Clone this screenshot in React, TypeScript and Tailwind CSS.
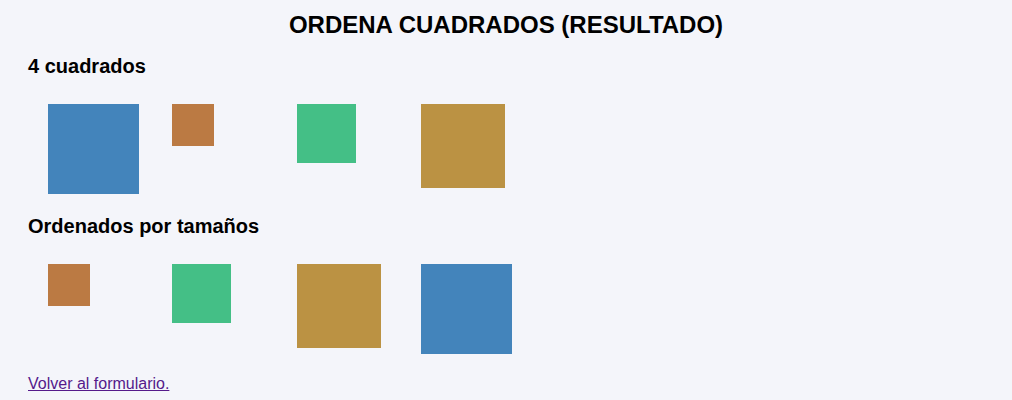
const font = { fontFamily: '"Liberation Sans", Arial, sans-serif' };

type Sq = { size: number; color: string };

const original: Sq[] = [
  { size: 91, color: "bg-[#4384bb]" },
  { size: 42, color: "bg-[#bb7a43]" },
  { size: 59, color: "bg-[#44bf86]" },
  { size: 84, color: "bg-[#bb9243]" },
];

const sorted = [...original].sort((a, b) => a.size - b.size);

function Row({ items }: { items: Sq[] }) {
  return (
    <div className="flex items-start pl-[20px] h-[90px]">
      {items.map((s, i) => (
        <div key={i} className="w-[124.4px] shrink-0">
          <div
            className={s.color}
            style={{ width: s.size, height: s.size === 91 ? 90 : s.size }}
          />
        </div>
      ))}
    </div>
  );
}

export default function App() {
  return (
    <div className="min-h-[400px] bg-[#f4f5fa] text-black px-[28px]" style={font}>
      <h1 className="pt-[11px] text-center text-[24px] leading-[28px] font-bold">
        ORDENA CUADRADOS (RESULTADO)
      </h1>
      <h3 className="mt-[15px] text-[20px] leading-[24px] font-bold">4 cuadrados</h3>
      <div className="mt-[26px]">
        <Row items={original} />
      </div>
      <h3 className="mt-[20px] text-[20px] leading-[24px] font-bold">Ordenados por tamaños</h3>
      <div className="mt-[26px]">
        <Row items={sorted} />
      </div>
      <div className="mt-[20px] text-[16px] leading-[20px]">
        <a href="#" className="text-[#551a8b] underline">Volver al formulario.</a>
      </div>
    </div>
  );
}
